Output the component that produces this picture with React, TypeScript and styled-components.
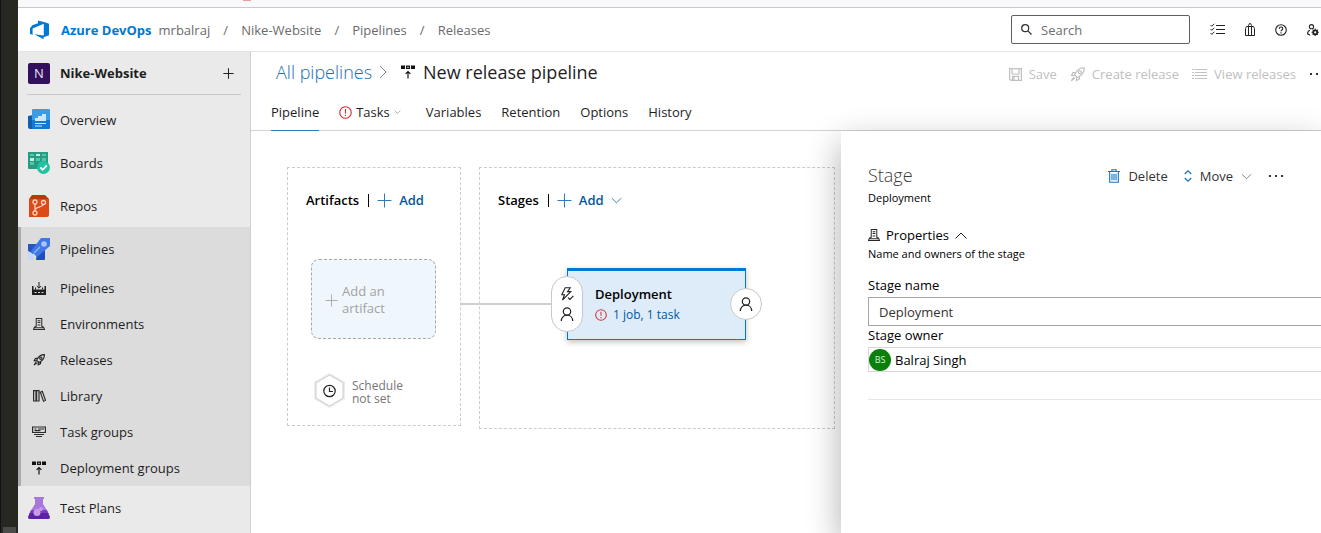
import React from "react";
import styled, { createGlobalStyle } from "styled-components";

const GlobalStyle = createGlobalStyle`
  *, *::before, *::after { box-sizing: border-box; }
  body {
    margin: 0;
    background: #fff;
    color: #1e1e1e;
    font-family: "Open Sans", "Noto Sans", "Liberation Sans", sans-serif;
    font-size: 13px;
    line-height: 20px;
  }
  h1, h2, h3, p, ul { margin: 0; padding: 0; font-weight: 400; }
  ul { list-style: none; }
  a { color: inherit; text-decoration: none; }
  button { font: inherit; color: inherit; background: none; border: 0; padding: 0; cursor: pointer; }
  svg { display: block; flex: none; }
`;

/* ---------- frame ---------- */

const Shell = styled.div`
  display: flex;
  min-height: 100vh;
  overflow: hidden;
`;

const EditorEdge = styled.div`
  display: flex;
  align-items: flex-end;
  flex: none;
  width: 18px;
  padding: 0 2px 0 2px;
  background: #282822;
  border-left: 1px solid #10131c;
`;

const EditorThumb = styled.div`
  width: 13px;
  height: 6px;
  background: #4b4b47;
`;

const Browser = styled.div`
  display: flex;
  flex-direction: column;
  flex: 1;
  min-width: 0;
`;

const BrowserEdge = styled.div`
  flex: none;
  height: 8px;
  padding-left: 225px;
  background: #f9f9fb;
  border-bottom: 1px solid #c9c9c9;
`;

const TabDot = styled.div`
  width: 8px;
  height: 1px;
  background: #ee9a9a;
`;

const TopBar = styled.header`
  display: flex;
  align-items: center;
  flex: none;
  height: 44px;
  padding: 0 2px 0 11px;
  border-bottom: 1px solid #e6e6e6;
`;

const Brand = styled.a`
  display: flex;
  align-items: center;
  gap: 11px;
  color: #0078d4;
  font-weight: 700;
`;

const Crumbs = styled.nav`
  display: flex;
  margin-left: 7px;
  color: #6b6b6b;
  white-space: nowrap;
`;

const CrumbSlash = styled.span`
  width: 31px;
  text-align: center;
`;

const SearchBox = styled.label`
  display: flex;
  align-items: center;
  gap: 9px;
  width: 179px;
  height: 29px;
  margin-left: auto;
  padding: 0 9px;
  border: 1px solid #5f5f5f;
  border-radius: 2px;
`;

const SearchInput = styled.input`
  flex: 1;
  min-width: 0;
  padding: 0;
  border: 0;
  outline: 0;
  background: none;
  font: inherit;
  &::placeholder { color: #6e6e6e; opacity: 1; }
`;

const TopIcons = styled.div`
  display: flex;
  align-items: center;
  gap: 20px;
  margin-left: 20px;
`;

const IconButton = styled.button`
  display: flex;
  align-items: center;
  justify-content: center;
`;

const Body = styled.div`
  display: flex;
  flex: 1;
  min-height: 0;
`;

/* ---------- sidebar ---------- */

const Sidebar = styled.nav`
  flex: none;
  width: 233px;
  background: #eaeaea;
  border-right: 1px solid #cfcfcf;
`;

const ProjectRow = styled.div`
  display: flex;
  align-items: center;
  height: 43px;
  margin: 0 9px 3px;
  padding: 0 7px 0 1px;
  border-bottom: 1px solid #c8c8c8;
`;

const ProjectBadge = styled.span`
  width: 22px;
  height: 21px;
  margin-right: 10px;
  border-radius: 2px;
  background: #32105c;
  color: #e9e2f3;
  text-align: center;
`;

const ProjectName = styled.a`
  flex: 1;
  font-weight: 700;
`;

const NavItem = styled.a<{ $small?: boolean; $strong?: boolean }>`
  display: flex;
  align-items: center;
  gap: 10px;
  height: ${(p) => (p.$small ? 36 : 43)}px;
  padding-left: 10px;
  font-weight: ${(p) => (p.$strong ? 500 : 400)};
`;

const NavIcon = styled.span`
  display: flex;
  justify-content: center;
  width: 22px;
`;

const NavSection = styled.div`
  background: #dcdcdc;
  box-shadow: inset 3px 0 0 #adadad;
`;

/* ---------- main ---------- */

const Main = styled.main`
  display: flex;
  flex-direction: column;
  flex: 1;
  min-width: 0;
  overflow: hidden;
`;

const MainHead = styled.div`
  flex: none;
  border-bottom: 1px solid #d2d2d2;
`;

const TitleRow = styled.div`
  display: flex;
  align-items: center;
  justify-content: space-between;
  height: 42px;
  padding: 0 0 2px 25px;
`;

const Title = styled.h1`
  display: flex;
  align-items: center;
  font-size: 18px;
  line-height: 24px;
  white-space: nowrap;
`;

const TitleLink = styled.a`
  margin-right: 7px;
  color: #1a6fb5;
  font-weight: 300;
`;

const TitleIcon = styled.span`
  margin: 0 8px 0 14px;
`;

const Commands = styled.div`
  display: flex;
  align-items: center;
  gap: 13px;
  margin-right: -4px;
  padding-top: 4px;
  white-space: nowrap;
`;

const Command = styled.button`
  display: flex;
  align-items: center;
  gap: 7px;
  &:disabled { color: #c0c0c0; cursor: default; }
`;

const Tabs = styled.div`
  display: flex;
  gap: 20px;
  height: 36px;
  padding-left: 20px;
`;

const Tab = styled.button<{ $active?: boolean; $menu?: boolean }>`
  display: flex;
  align-items: center;
  gap: 4px;
  padding-right: ${(p) => (p.$menu ? 5 : 0)}px;
  font-weight: ${(p) => (p.$active ? 500 : 400)};
  box-shadow: ${(p) => (p.$active ? "0 1px 0 #2b7cbf" : "none")};
`;

const Canvas = styled.section`
  position: relative;
  display: flex;
  align-items: flex-start;
  flex: 1;
  gap: 18px;
  padding: 36px;
`;

const Lane = styled.section<{ $width: number; $height: number }>`
  flex: none;
  width: ${(p) => p.$width}px;
  min-height: ${(p) => p.$height}px;
  padding: 22px 17px 16px 18px;
  border: 1px dashed #cccccc;
`;

const LaneHead = styled.div`
  display: flex;
  align-items: center;
  color: #000;
  white-space: nowrap;
`;

const LaneTitle = styled.h2`
  padding-right: 9px;
  font-size: 13px;
  line-height: 20px;
  font-weight: 600;
`;

const LaneAdd = styled.button`
  display: flex;
  align-items: center;
  gap: 7px;
  color: #005a9e;
  font-weight: 600;
`;

const LaneRule = styled.span`
  width: 1px;
  height: 13px;
  margin-right: 8px;
  background: #000;
`;

const ArtifactTile = styled.button`
  display: flex;
  align-items: center;
  gap: 4px;
  width: 125px;
  height: 80px;
  margin: 49px 0 0 5px;
  padding: 2px 0 0 13px;
  border: 1px dashed #a8a8a8;
  border-radius: 8px;
  background: #eff6fc;
  color: #a3a3a3;
  line-height: 17px;
  text-align: left;
`;

const Schedule = styled.button`
  display: flex;
  align-items: center;
  gap: 7px;
  margin: 34px 0 0 8px;
  color: #767676;
  font-size: 12px;
  line-height: 13px;
  text-align: left;
`;

const ScheduleText = styled.span`
  padding-top: 3px;
`;

const StageNode = styled.article`
  position: relative;
  width: 179px;
  height: 72px;
  margin: 58px 0 0 69px;
  padding: 13px 0 0 27px;
  border: 1px solid #0078d4;
  border-top-width: 3px;
  background: #deecf9;
  box-shadow: 0 2px 6px rgba(0, 0, 0, 0.25);
`;

const StageName = styled.h3`
  color: #000;
  font-size: 13px;
  line-height: 20px;
  font-weight: 600;
`;

const StageJobs = styled.a`
  display: flex;
  align-items: center;
  gap: 6px;
  color: #005a9e;
  font-size: 12px;
  line-height: 22px;
`;

const Connector = styled.span`
  position: absolute;
  top: 32px;
  right: 100%;
  width: 107px;
  height: 2px;
  background: #d0d0d0;
`;

const Gate = styled.button<{ $side: "before" | "after" }>`
  position: absolute;
  top: calc(50% - 1px);
  ${(p) => (p.$side === "before" ? "left: -1px;" : "left: calc(100% + 1px);")}
  display: flex;
  flex-direction: column;
  align-items: center;
  justify-content: center;
  gap: 6px;
  width: 32px;
  height: ${(p) => (p.$side === "before" ? 56 : 32)}px;
  border: 1px solid #c8c8c8;
  border-radius: 16px;
  background: #fff;
  transform: translate(-50%, -50%);
`;

/* ---------- stage panel ---------- */

const Panel = styled.aside`
  position: absolute;
  top: 0;
  right: 0;
  bottom: 0;
  width: 480px;
  padding: 30px 0 0 27px;
  background: #fff;
  box-shadow: 0 12px 32px rgba(0, 0, 0, 0.32);
  color: #000;
`;

const PanelHead = styled.div`
  display: flex;
  align-items: center;
  justify-content: space-between;
  height: 28px;
  padding-right: 37px;
`;

const PanelTitle = styled.h2`
  color: #3c3c3c;
  font-size: 18px;
  line-height: 28px;
  font-weight: 300;
`;

const PanelActions = styled.div`
  display: flex;
  align-items: center;
  gap: 16px;
  padding-top: 2px;
  color: #333;
`;

const PanelAction = styled.button`
  display: flex;
  align-items: center;
  gap: 8px;
`;

const Small = styled.p`
  font-size: 11px;
  line-height: 18px;
  font-weight: 500;
`;

const SectionToggle = styled.button`
  display: flex;
  align-items: center;
  gap: 6px;
  margin-top: 18px;
`;

const Fields = styled.div`
  display: flex;
  flex-direction: column;
  margin-top: 13px;
  padding-bottom: 27px;
  border-bottom: 1px solid #e6e6e6;
`;

const FieldLabel = styled.label`
  height: 21px;
  line-height: 19px;
`;

const TextInput = styled.input`
  width: 100%;
  height: 29px;
  padding: 0 10px;
  border: 1px solid #a6a6a6;
  border-right: 0;
  border-radius: 0;
  color: #333;
  font: inherit;
`;

const OwnerBox = styled.div`
  display: flex;
  align-items: center;
  gap: 4px;
  height: 25px;
  border: 1px solid #d8d8d8;
  border-right: 0;
`;

const Avatar = styled.span`
  flex: none;
  width: 22px;
  height: 22px;
  border-radius: 50%;
  background: #0a800a;
  color: #d9efd9;
  font-size: 9px;
  line-height: 22px;
  text-align: center;
`;

const OwnerInput = styled.input`
  flex: 1;
  min-width: 0;
  padding: 0;
  border: 0;
  outline: 0;
  color: #000;
  font: inherit;
`;

/* ---------- icons ---------- */

type IconProps = { w?: number; h?: number; color?: string; box?: string; sw?: number; children: React.ReactNode };

const Icon = ({ w = 16, h = w, color = "currentColor", box = "0 0 16 16", sw = 1, children }: IconProps) => (
  <svg width={w} height={h} viewBox={box} fill="none" stroke={color} strokeWidth={sw} aria-hidden="true">
    {children}
  </svg>
);

const AzureLogo = () => (
  <svg width="21" height="20" viewBox="0 0 21 20" aria-hidden="true">
    <path
      fill="#0078d4"
      d="M9 0.500v2.800L3.300 5.200 1 8.200v5.600l2.600 1.100V8.600l11.200-4.800v11.600l-9.600-1.200 9.400 5v-1.900l5.400-2V3.800L16.600 2.600Z"
    />
  </svg>
);

const Plus = ({ size = 14, color = "currentColor", sw = 1 }) => (
  <Icon w={size} box="0 0 15 15" color={color} sw={sw}>
    <path d="M7.500 0.500v14M0.500 7.500h14" />
  </Icon>
);

const Chevron = ({ w = 11, color = "currentColor", dir = "down" }) => (
  <Icon w={w} h={dir === "right" ? 14 : Math.round(w * 0.6)} box={dir === "right" ? "0 0 8 14" : "0 0 12 7"} color={color}>
    <path d={dir === "down" ? "M1 1l5 5 5-5" : dir === "up" ? "M0.500 6.500l5.500-5.500 5.500 5.500" : "M1 1l6 6-6 6"} />
  </Icon>
);

const Person = () => (
  <Icon w={14} box="0 0 14 14" color="#222" sw={1.2}>
    <circle cx="7" cy="4.500" r="3.700" />
    <path d="M1.300 14c0-3.400 2.300-5.800 5.700-5.800s5.700 2.400 5.700 5.800" />
  </Icon>
);

const Alert = ({ size = 13 }) => (
  <Icon w={size} box="0 0 14 14" color="#d92c2c" sw={1.2}>
    <circle cx="7" cy="7" r="6.200" />
    <path d="M7 3.200v4.800M7 9.300v1.600" />
  </Icon>
);

const More = () => (
  <svg width="16" height="4" viewBox="0 0 16 4" fill="#333" aria-hidden="true">
    <path d="M1 1h2v2H1zM7 1h2v2H7zM13 1h2v2h-2z" />
  </svg>
);

const DeployGroups = ({ size = 14 }) => (
  <Icon w={size} box="0 0 14 14" color="#111" sw={1.2}>
    <path fill="#111" stroke="none" d="M0 0.500h4v3.500H0zM10 0.500h4v3.500h-4z" />
    <path d="M5.600 1.100h2.800v2.300h-2.800zM7 13.500V6.500M4.600 8.900L7 6.500l2.400 2.400" />
  </Icon>
);

const Server = ({ size = 13 }) => (
  <Icon w={size} box="0 0 13 13" color="#2a2a2a" sw={1.1}>
    <path d="M3.500 9.500v-9h6v9M5 3h3M5 5h3M5 7.500h3M3.500 8.500l-2 1.500-1 2.500h12l-1-2.500-2-1.500M1.500 10.500h10" />
  </Icon>
);

const Rocket = ({ size = 14, color = "#222", sw = 1.1 }) => (
  <Icon w={size} box="0 0 15 15" color={color} sw={sw}>
    <path d="M14.200 0.800c-4 0-6.600 1.600-8.600 5L4.600 8l2.600 2.600 2.200-1.200c3.400-2 4.900-4.600 4.800-8.600zM6 5.200l-3 .4-1.500 2.900 3 .1M9.800 9l-.4 3-2.900 1.500-.1-3M4 10.200l-2.800 3.600 3.700-2.700" />
    <circle cx="9.800" cy="5.200" r="1.500" />
  </Icon>
);

const OverviewIcon = () => (
  <svg width="22" height="21" viewBox="0 0 22 21" aria-hidden="true">
    <path fill="#0f5fae" d="M0 7l5-1v14H2a2 2 0 0 1-2-2z" />
    <path fill="#3a9be6" d="M4 1a1 1 0 0 1 1-1h16a1 1 0 0 1 1 1v10H4z" />
    <path fill="#1877d2" d="M4 11h18v8a1 1 0 0 1-1 1H4z" />
    <path fill="#cde6fa" d="M7 12V9h3V7h4V5h4v7zM7 14h11v1H7zM7 16.500h7v1H7z" />
  </svg>
);

const BoardsIcon = () => (
  <svg width="22" height="22" viewBox="0 0 22 22" aria-hidden="true">
    <path fill="#2a9a83" d="M0 0h20v17H1a1 1 0 0 1-1-1z" />
    <path fill="#4cc9a6" d="M2 2h4v2H2zM14 2h4v2h-4zM8 6h4v3H8zM14 6h4v3h-4zM2 10h4v3H2z" />
    <path fill="#b8f5dd" d="M8 2h4v2H8zM2 6h4v3H2z" />
    <circle cx="15.500" cy="15.500" r="6.500" fill="#1fc3a0" />
    <path d="M12.300 15.500l2.300 2.300 4.200-4.300" fill="none" stroke="#fff" strokeWidth="1.800" />
  </svg>
);

const ReposIcon = () => (
  <svg width="22" height="22" viewBox="0 0 22 22" aria-hidden="true">
    <path fill="#b73a08" d="M4 0h13l4 4H1z" />
    <path fill="#dd4a18" d="M1 4h20v16a2 2 0 0 1-2 2H1z" />
    <g fill="none" stroke="#f9d2c0" strokeWidth="1.300">
      <circle cx="7" cy="7" r="2" />
      <circle cx="15.500" cy="7.500" r="2" />
      <circle cx="7" cy="18" r="2" />
      <path d="M7 9v7M15 9.500c-.5 3.500-8 2-8 6" />
    </g>
  </svg>
);

const PipelinesIcon = () => (
  <svg width="22" height="22" viewBox="0 0 22 22" aria-hidden="true">
    <path fill="#2456bd" d="M0 6h10v5L5 16H1l-1-3z" />
    <path fill="#1d4fc0" d="M9 14l8-4v11a1 1 0 0 1-1 1H8z" />
    <path fill="#3f78e6" d="M13 0h9v8L9 19l-6-6z" />
    <circle cx="16" cy="6" r="2.800" fill="#a9c6fa" />
    <path d="M6 15l6-6" stroke="#8db2f5" strokeWidth="1.500" />
    <path fill="#c5d8fb" d="M0 13l4 2 3 3-2 1 1 3H0z" />
  </svg>
);

const FlaskIcon = () => (
  <svg width="22" height="22" viewBox="0 0 22 22" aria-hidden="true">
    <path fill="#a877da" d="M6 0h10v2h-1v5l5 8H2l5-8V2H6z" />
    <path fill="#7c3cc4" d="M3.200 13h15.600l2 4H1.200z" />
    <path fill="#5f21a8" d="M1.800 16h18.400l1.600 3.500A1.700 1.700 0 0 1 20.500 22h-19A1.700 1.700 0 0 1 .2 19.500z" />
    <circle cx="9" cy="15.500" r="3.500" fill="#c79bea" />
    <circle cx="13" cy="12" r="2" fill="#c79bea" />
  </svg>
);

const BuildIcon = () => (
  <Icon w={14} h={13} box="0 0 14 13" color="#1f1f1f">
    <path fill="#1f1f1f" stroke="none" d="M0 4h1.500v3.500h11V4H14v9H0z" />
    <path stroke="#dcdcdc" d="M2.500 10.500h2M6 10.500h2M9.500 10.500h2" />
    <path d="M7 0v6M4.800 4L7 6.200 9.200 4M3.500 5.500v2M10.500 5.500v2" />
  </Icon>
);

const LibraryIcon = () => (
  <Icon w={13} h={12} box="0 0 13 12" color="#2b2b2b" sw={1.2}>
    <path d="M0.600 0.600h2.400v10.400H0.600zM3.600 0.600h2.400v10.400H3.600zM7.300 2.200l2-.8 3.200 9-2 .8z" />
  </Icon>
);

const TaskGroupsIcon = () => (
  <Icon w={14} h={12} box="0 0 14 12" color="#2b2b2b" sw={1.2}>
    <path d="M0.600 1h12.800v5.500H0.600zM2.500 3h2M6 3h6M2.500 4.700h6M2 8.500h10M4 10.500h6" />
  </Icon>
);

const SearchIcon = () => (
  <Icon w={11} box="0 0 11 11" color="#333" sw={1.2}>
    <circle cx="4.200" cy="4.200" r="3.500" />
    <path d="M6.800 6.800l3.700 3.700" />
  </Icon>
);

const ChecklistIcon = () => (
  <Icon w={15} h={13} box="0 0 15 13" color="#222">
    <path d="M6 2.500h9M6 6.500h9M6 10.500h9M0.500 2l1.300 1.300L4.300 0.800M0.500 6l1.300 1.300 2.500-2.500M0.500 10l1.300 1.300 2.500-2.500" />
  </Icon>
);

const BagIcon = () => (
  <Icon w={10} h={13} box="0 0 10 13" color="#222">
    <path d="M0.500 5.500l1-2h7l1 2v7h-9zM3.500 12.500v-10l1-2h1l1 2v10M3.500 3.500h3" />
  </Icon>
);

const HelpIcon = () => (
  <Icon w={12} box="0 0 12 12" color="#222" sw={1.1}>
    <circle cx="6" cy="6" r="5.300" />
    <path d="M4.300 4.800c0-2.400 3.500-2.200 3.500-.2C7.800 6 6 5.900 6 7.300M6 8.300v1.200" />
  </Icon>
);

const UserSettingsIcon = () => (
  <Icon w={12} box="0 0 12 12" color="#222" sw={1.1}>
    <circle cx="4.500" cy="2.700" r="2.100" />
    <path d="M3 6.300C1.300 6.800 0.600 8 0.600 9.800l2.600 1.400" />
    <circle cx="8.200" cy="8.300" r="2" strokeWidth="1.800" />
    <path d="M8.200 4.600v1.800M8.200 10.200v1.800M4.500 8.300h1.800M10.100 8.300h1.800M5.600 5.700l1.200 1.200M9.600 9.700l1.200 1.200M10.800 5.700l-1.200 1.200M6.800 9.700l-1.200 1.200" />
  </Icon>
);

const SaveIcon = () => (
  <Icon w={13} box="0 0 13 13" sw={1.2}>
    <path d="M0.600 0.600h11.800v11.800H2L0.600 11zM3 0.600V6h7V0.600M3.500 12.400v-4h6v4M5 9v3" />
  </Icon>
);

const ListIcon = () => (
  <Icon w={15} h={11} box="0 0 15 11">
    <path d="M0 0.500h2M0 3.500h2M0 6.500h2M0 9.500h2M3 0.500h12M3 3.500h12M3 6.500h12M3 9.500h12" />
  </Icon>
);

const TrashIcon = () => (
  <Icon w={12} h={14} box="0 0 13 15" color="#1373c4" sw={1.2}>
    <path d="M0 2.600h13M4.200 2.500V0.800h4.600v1.700M1.800 2.600v11.600h9.400V2.600" />
    <path d="M4.300 5v7M6.500 5v7M8.700 5v7" />
  </Icon>
);

const MoveIcon = () => (
  <Icon w={8} h={12} box="0 0 8 12" color="#1373c4" sw={1.3}>
    <path d="M0.800 4L4 0.900 7.200 4M0.800 8L4 11.100 7.200 8" />
  </Icon>
);

const BoltIcon = () => (
  <Icon w={14} box="0 0 14 14" color="#222" sw={1.1}>
    <path d="M5.200 0.700h5L7.500 4.600h3.300L2.500 13l2-5.200H1.800zM8 10.600l1.900 1.900 3.500-3.700" />
  </Icon>
);

const ScheduleIcon = () => (
  <svg width="31" height="35" viewBox="0 0 31 35" fill="none" aria-hidden="true">
    <path d="M15.500 1.500l14 8v16l-14 8-14-8v-16z" stroke="#ededed" strokeWidth="3" />
    <path d="M15.500 2l13.500 7.800v15.400L15.500 33 2 25.200V9.800z" fill="#fff" stroke="#cbcbcb" />
    <circle cx="15.500" cy="18" r="5.700" stroke="#222" strokeWidth="1.200" />
    <path d="M15.500 14.500V18.500h3.500" stroke="#222" strokeWidth="1.200" />
  </svg>
);

/* ---------- data ---------- */

const services = [
  { name: "Overview", icon: <OverviewIcon /> },
  { name: "Boards", icon: <BoardsIcon /> },
  { name: "Repos", icon: <ReposIcon /> },
];

const pipelinePages = [
  { name: "Pipelines", icon: <BuildIcon /> },
  { name: "Environments", icon: <Server size={12} /> },
  { name: "Releases", icon: <Rocket size={12} sw={1.4} /> },
  { name: "Library", icon: <LibraryIcon /> },
  { name: "Task groups", icon: <TaskGroupsIcon /> },
  { name: "Deployment groups", icon: <DeployGroups size={14} /> },
];

const crumbs = ["mrbalraj", "Nike-Website", "Pipelines", "Releases"];

export default function App() {
  return (
    <>
      <GlobalStyle />
      <Shell>
        <EditorEdge>
          <EditorThumb />
        </EditorEdge>
        <Browser>
          <BrowserEdge>
            <TabDot />
          </BrowserEdge>
          <TopBar>
            <Brand href="#">
              <AzureLogo />
              Azure DevOps
            </Brand>
            <Crumbs aria-label="Breadcrumb">
              {crumbs.map((name, i) => (
                <React.Fragment key={name}>
                  {i > 0 && <CrumbSlash>/</CrumbSlash>}
                  <a href="#">{name}</a>
                </React.Fragment>
              ))}
            </Crumbs>
            <SearchBox>
              <SearchIcon />
              <SearchInput type="search" placeholder="Search" aria-label="Search" />
            </SearchBox>
            <TopIcons>
              <IconButton aria-label="Work items"><ChecklistIcon /></IconButton>
              <IconButton aria-label="Marketplace"><BagIcon /></IconButton>
              <IconButton aria-label="Help"><HelpIcon /></IconButton>
              <IconButton aria-label="User settings"><UserSettingsIcon /></IconButton>
            </TopIcons>
          </TopBar>
          <Body>
            <Sidebar aria-label="Project">
              <ProjectRow>
                <ProjectBadge>N</ProjectBadge>
                <ProjectName href="#">Nike-Website</ProjectName>
                <IconButton aria-label="Create"><Plus size={11} color="#222" sw={1.4} /></IconButton>
              </ProjectRow>
              {services.map((s) => (
                <NavItem href="#" key={s.name}>
                  <NavIcon>{s.icon}</NavIcon>
                  {s.name}
                </NavItem>
              ))}
              <NavSection>
                <NavItem href="#" $strong>
                  <NavIcon><PipelinesIcon /></NavIcon>
                  Pipelines
                </NavItem>
                {pipelinePages.map((p) => (
                  <NavItem href="#" $small key={p.name}>
                    <NavIcon>{p.icon}</NavIcon>
                    {p.name}
                  </NavItem>
                ))}
              </NavSection>
              <NavItem href="#">
                <NavIcon><FlaskIcon /></NavIcon>
                Test Plans
              </NavItem>
            </Sidebar>

            <Main>
              <MainHead>
                <TitleRow>
                  <Title>
                    <TitleLink href="#">All pipelines</TitleLink>
                    <Chevron w={8} dir="right" color="#8a8a8a" />
                    <TitleIcon><DeployGroups size={14} /></TitleIcon>
                    New release pipeline
                  </Title>
                  <Commands>
                    <Command disabled><SaveIcon />Save</Command>
                    <Command disabled><Rocket size={15} color="#bcbcbc" />Create release</Command>
                    <Command disabled><ListIcon />View releases</Command>
                    <IconButton aria-label="More commands"><More /></IconButton>
                  </Commands>
                </TitleRow>
                <Tabs>
                  <Tab $active>Pipeline</Tab>
                  <Tab $menu><Alert />Tasks <Chevron w={7} color="#777" /></Tab>
                  <Tab>Variables</Tab>
                  <Tab>Retention</Tab>
                  <Tab>Options</Tab>
                  <Tab>History</Tab>
                </Tabs>
              </MainHead>

              <Canvas>
                <Lane $width={174} $height={259}>
                  <LaneHead>
                    <LaneTitle>Artifacts</LaneTitle>
                    <LaneRule />
                    <LaneAdd><Plus size={15} color="#2b7bbd" />Add</LaneAdd>
                  </LaneHead>
                  <ArtifactTile>
                    <Plus size={13} color="#a3a3a3" />
                    <span>Add an<br />artifact</span>
                  </ArtifactTile>
                  <Schedule>
                    <ScheduleIcon />
                    <ScheduleText>Schedule<br />not set</ScheduleText>
                  </Schedule>
                </Lane>
                <Lane $width={356} $height={262}>
                  <LaneHead>
                    <LaneTitle>Stages</LaneTitle>
                    <LaneRule />
                    <LaneAdd><Plus size={15} color="#2b7bbd" />Add<Chevron w={11} color="#2b7bbd" /></LaneAdd>
                  </LaneHead>
                  <StageNode>
                    <Connector />
                    <StageName>Deployment</StageName>
                    <StageJobs href="#"><Alert size={12} />1 job, 1 task</StageJobs>
                    <Gate $side="before" aria-label="Pre-deployment conditions">
                      <BoltIcon />
                      <Person />
                    </Gate>
                    <Gate $side="after" aria-label="Post-deployment conditions">
                      <Person />
                    </Gate>
                  </StageNode>
                </Lane>

                <Panel>
                  <PanelHead>
                    <PanelTitle>Stage</PanelTitle>
                    <PanelActions>
                      <PanelAction><TrashIcon />Delete</PanelAction>
                      <PanelAction><MoveIcon />Move<Chevron w={11} color="#777" /></PanelAction>
                      <IconButton aria-label="More actions"><More /></IconButton>
                    </PanelActions>
                  </PanelHead>
                  <Small>Deployment</Small>
                  <SectionToggle aria-expanded="true">
                    <Server size={12} />
                    Properties
                    <Chevron w={12} dir="up" color="#222" />
                  </SectionToggle>
                  <Small>Name and owners of the stage</Small>
                  <Fields>
                    <FieldLabel htmlFor="stage-name">Stage name</FieldLabel>
                    <TextInput id="stage-name" defaultValue="Deployment" />
                    <FieldLabel htmlFor="stage-owner">Stage owner</FieldLabel>
                    <OwnerBox>
                      <Avatar>BS</Avatar>
                      <OwnerInput id="stage-owner" defaultValue="Balraj Singh" />
                    </OwnerBox>
                  </Fields>
                </Panel>
              </Canvas>
            </Main>
          </Body>
        </Browser>
      </Shell>
    </>
  );
}
